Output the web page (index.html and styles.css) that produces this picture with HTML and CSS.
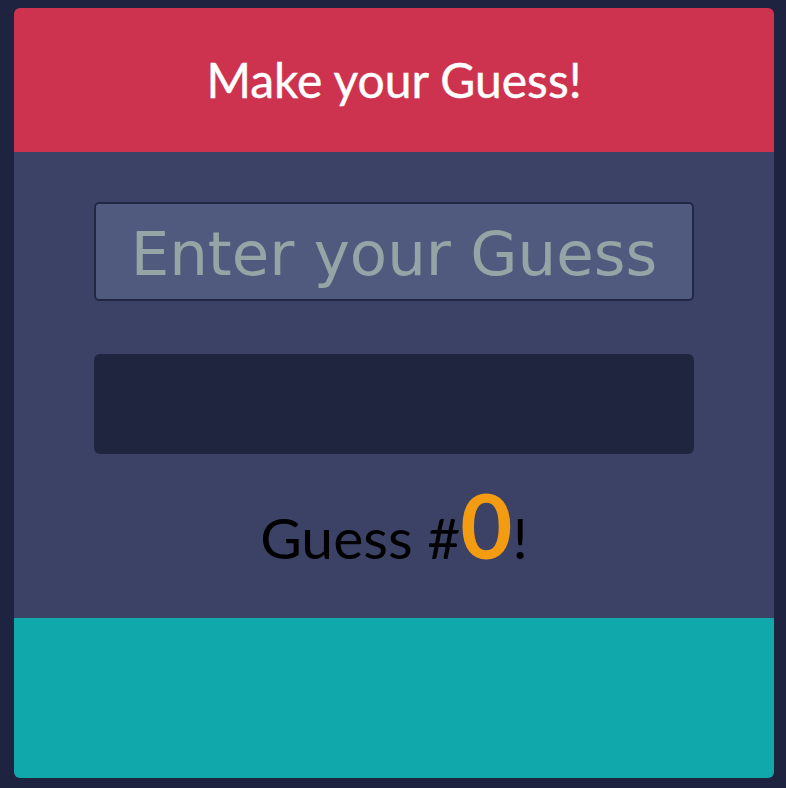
FILE: index.html
```html
<!DOCTYPE html>
<html>
<head>
<meta charset="utf-8">
<link rel="stylesheet" href="styles.css">
</head>
<body>
<div class="card">
  <div class="header"><h1 class="title">Make your Guess!</h1></div>
  <div class="main">
    <input class="guess-input" type="text" placeholder="Enter your Guess">
    <div class="result"></div>
    <p class="counter">Guess #<span class="count">0</span>!</p>
  </div>
  <div class="footer"></div>
</div>
</body>
</html>
```
FILE: styles.css
```css
html, body {
  margin: 0;
  padding: 0;
  background: #1e2340;
  height: 100%;
}
body {
  padding: 8px 12px 0 14px;
  box-sizing: border-box;
}
.card {
  width: 760px;
  border-radius: 6px;
  overflow: hidden;
  display: flex;
  flex-direction: column;
  font-family: Lato, "Noto Sans", sans-serif;
}
.header {
  height: 144px;
  background: #cd334e;
  display: flex;
  align-items: center;
  justify-content: center;
}
.title {
  margin: 0;
  color: #ffffff;
  font-weight: 400;
  font-size: 48px;
  line-height: 1;
  -webkit-text-stroke: 0.4px #ffffff;
}
.main {
  height: 466px;
  box-sizing: border-box;
  background: #3b4266;
  display: flex;
  flex-direction: column;
  align-items: center;
  padding-top: 50px;
}
.guess-input {
  width: 600px;
  height: 99px;
  box-sizing: border-box;
  border: 2px solid #222843;
  border-radius: 5px;
  background: #505a7e;
  font-family: "DejaVu Sans", "Open Sans", sans-serif;
  font-size: 61px;
  text-align: center;
  color: #95a5a6;
  outline: none;
  padding: 4px 0 0;
}
.guess-input::placeholder {
  color: #95a5a6;
  opacity: 1;
}
.result {
  width: 600px;
  height: 100px;
  margin-top: 53px;
  background: #20253f;
  border-radius: 6px;
}
.counter {
  margin: 25px 0 0;
  font-size: 57px;
  line-height: 1;
  color: #000000;
}
.count {
  color: #f39c12;
  font-weight: 700;
  font-size: 90px;
}
.footer {
  height: 160px;
  background: #11a8ab;
}
```
